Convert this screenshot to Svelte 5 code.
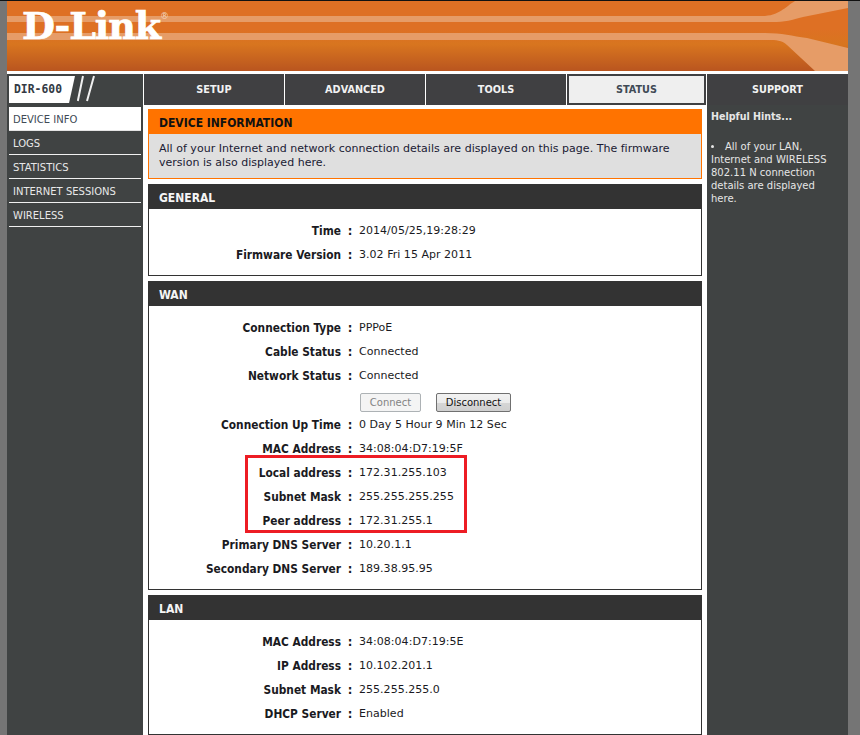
<script>
  const tabs = [
    { label: 'SETUP' },
    { label: 'ADVANCED' },
    { label: 'TOOLS' },
    { label: 'STATUS', active: true },
    { label: 'SUPPORT' }
  ];
  const side = ['DEVICE INFO', 'LOGS', 'STATISTICS', 'INTERNET SESSIONS', 'WIRELESS'];
  const general = [['Time', '2014/05/25,19:28:29'], ['Firmware Version', '3.02 Fri 15 Apr 2011']];
  const wanA = [['Connection Type', 'PPPoE'], ['Cable Status', 'Connected'], ['Network Status', 'Connected']];
  const wanB = [
    ['Connection Up Time', '0 Day 5 Hour 9 Min 12 Sec'],
    ['MAC Address', '34:08:04:D7:19:5F'],
    ['Local address', '172.31.255.103'],
    ['Subnet Mask', '255.255.255.255'],
    ['Peer address', '172.31.255.1'],
    ['Primary DNS Server', '10.20.1.1'],
    ['Secondary DNS Server', '189.38.95.95']
  ];
  const lan = [
    ['MAC Address', '34:08:04:D7:19:5E'],
    ['IP Address', '10.102.201.1'],
    ['Subnet Mask', '255.255.255.0'],
    ['DHCP Server', 'Enabled']
  ];
</script>

{#snippet row(r)}
  <div class="row"><span class="k">{r[0]}</span><span class="c">:</span><span class="v">{r[1]}</span></div>
{/snippet}

<div class="page">
  <div class="inner">
    <header class="banner">
      <svg class="swoosh" viewBox="0 0 841 70" width="841" height="70" aria-hidden="true">
        <path d="M0 15H755C772 15 778 6 788 0H841V7L796 16C785 19 778 21 765 21H0Z" fill="#e69c67"/>
        <path d="M0 32H758C775 32 785 35 800 37L841 47V70H808L780 44C774 39 770 39 760 39H0Z" fill="#e69c67"/>
      </svg>
      <div class="logo">D-Link<sup>®</sup></div>
    </header>

    <nav class="nav">
      <div class="brand">
        <span class="model">DIR-600</span>
        <svg class="slashes" width="30" height="29" viewBox="0 0 30 29" aria-hidden="true">
          <path d="M6 2 0.8 27M17 2 10 27" stroke="#f0f0f0" stroke-width="2" fill="none"/>
        </svg>
      </div>
      {#each tabs as t}
        <div class="tab" class:active={t.active}>{t.label}</div>
      {/each}
    </nav>

    <div class="layout">
      <aside class="side">
        {#each side as s, i}
          <div class="item" class:on={i === 0}>{s}</div>
        {/each}
      </aside>

      <main class="main">
        <section class="intro">
          <h1>DEVICE INFORMATION</h1>
          <p>All of your Internet and network connection details are displayed on this page. The firmware version is also displayed here.</p>
        </section>

        <section class="box">
          <h2>GENERAL</h2>
          <div class="body">
            {#each general as r}{@render row(r)}{/each}
          </div>
        </section>

        <section class="box">
          <h2>WAN</h2>
          <div class="body wan">
            {#each wanA as r}{@render row(r)}{/each}
            <div class="btns">
              <button class="btn" disabled>Connect</button>
              <button class="btn">Disconnect</button>
            </div>
            {#each wanB as r}{@render row(r)}{/each}
            <div class="mark"></div>
          </div>
        </section>

        <section class="box last">
          <h2>LAN</h2>
          <div class="body">
            {#each lan as r}{@render row(r)}{/each}
          </div>
        </section>
      </main>

      <aside class="hints">
        <strong>Helpful Hints...</strong>
        <ul><li>All of your LAN, Internet and WIRELESS 802.11 N connection details are displayed here.</li></ul>
      </aside>
    </div>
  </div>
</div>

<style>
  :global(body) {
    margin: 0;
    background: #757575;
    font-family: "DejaVu Sans", Verdana, sans-serif;
  }
  .page {
    width: 860px;
    height: 735px;
    overflow: hidden;
    box-sizing: border-box;
    border-top: 1px solid #111;
    padding: 0 12px 0 7px;
    background: #757575;
    font-size: 11px;
  }
  .inner {
    background: #fff;
    height: 734px;
  }
  .banner {
    position: relative;
    height: 70px;
    background: linear-gradient(#de7024 0, #de7024 40%, #d8751f 62%, #b9551f 100%);
    overflow: hidden;
  }
  .swoosh { position: absolute; left: 0; top: 0; }
  .logo {
    position: relative;
    padding: 5px 0 0 15px;
    font: bold 38px/40px "DejaVu Serif", serif;
    letter-spacing: -1.1px;
    color: #fff;
    -webkit-text-stroke: .7px #fff;
  }
  .logo sup {
    font: 9px "DejaVu Sans", sans-serif;
    letter-spacing: 0;
    vertical-align: 20px;
    line-height: 0;
    -webkit-text-stroke: 0;
    color: #f3d5bf;
  }
  .nav {
    display: grid;
    grid-template-columns: 136px 140px 140px 140px 139px 141px;
    column-gap: 1px;
    height: 29px;
    margin-top: 3px;
  }
  .brand {
    background: #404343;
    padding: 2px;
    display: flex;
    align-items: stretch;
  }
  .model {
    background: #fff;
    width: 66px;
    padding-left: 5px;
    box-sizing: border-box;
    font: bold 11.4px/26px "DejaVu Sans Mono", monospace;
    color: #333a44;
    clip-path: polygon(0 0, 100% 0, 91% 100%, 0 100%);
  }
  .slashes { margin: -2px 0 0 2px; }
  .tab {
    background: #404042;
    color: #f2f2f2;
    font-weight: bold;
    font-stretch: condensed;
    font-size: 10.8px;
    line-height: 31px;
    text-align: center;
  }
  .tab.active {
    background: #efefef;
    color: #404a55;
    box-sizing: border-box;
    border: 2px solid #404042;
    line-height: 27px;
  }
  .layout {
    display: grid;
    grid-template-columns: 136px 564px 141px;
    margin-top: 2px;
  }
  .side {
    background: #404343;
    padding: 2px;
    height: 630px;
    box-sizing: border-box;
  }
  .item {
    color: #e8e8e8;
    font-size: 10px;
    line-height: 25px;
    height: 23px;
    padding-left: 4px;
    border-bottom: 1px solid #f0f0f0;
  }
  .item.on {
    background: #fff;
    color: #404a55;
    border-bottom-color: #e4e4e4;
  }
  .main {
    padding: 4px 5px 0 5px;
  }
  .intro {
    border: 1px solid #ff7300;
    background: #dfdfdf;
    height: 70px;
    box-sizing: border-box;
    margin-bottom: 5px;
  }
  .intro h1 {
    margin: 0;
    background: #ff7300;
    color: #111;
    font-size: 12px;
    font-stretch: condensed;
    font-weight: bold;
    line-height: 26px;
    height: 24px;
    padding-left: 10px;
  }
  .intro p {
    margin: 0;
    padding: 8px 10px 0 10px;
    font-size: 11px;
    letter-spacing: .02px;
    line-height: 14px;
    color: #1a1a33;
  }
  .box {
    border: 1px solid #333;
    border-top: 0;
    margin-bottom: 5px;
    background: #fff;
  }
  .box h2 {
    margin: 0 -1px;
    background: #333;
    color: #f5f5f5;
    font-size: 12px;
    font-stretch: condensed;
    font-weight: bold;
    line-height: 29px;
    height: 25px;
    padding-left: 11px;
  }
  .body {
    position: relative;
    padding: 10px 0 8px;
  }
  .row {
    display: grid;
    grid-template-columns: 192px 18px 1fr;
    height: 24px;
    line-height: 24px;
    font-size: 11px;
    letter-spacing: .03px;
    color: #1a1a22;
  }
  .k {
    font-size: 11.8px;
    letter-spacing: 0;
    font-weight: bold;
    font-stretch: condensed;
    text-align: right;
    white-space: nowrap;
  }
  .c { font-size: 11.5px; font-weight: bold; text-align: center; }
  .v { white-space: nowrap; }
  .btns {
    display: flex;
    gap: 15px;
    padding: 5px 0 0 211px;
    height: 25px;
    box-sizing: border-box;
    align-items: flex-start;
  }
  .btn {
    font: 10px "DejaVu Sans", sans-serif;
    height: 19px;
    padding: 0;
    border: 1px solid #707070;
    border-radius: 2px;
    background: linear-gradient(#f2f2f2, #ebebeb 50%, #d6d6d6 51%, #cfcfcf);
    color: #111;
    width: 75px;
  }
  .btn[disabled] {
    width: 61px;
    border-color: #adb2b5;
    background: #f4f4f4;
    color: #838383;
  }
  .mark {
    position: absolute;
    left: 96px;
    top: 149px;
    width: 216px;
    height: 72px;
    border: 3px solid #ed1c24;
  }
  .hints {
    background: #404343;
    color: #e6e6e6;
    height: 630px;
    font-size: 10px;
    line-height: 13px;
    padding: 4px 12px 0 4px;
    box-sizing: border-box;
  }
  .hints strong { display: block; font-size: 10.6px; font-stretch: condensed; line-height: 14px; }
  .hints ul { margin: 17px 0 0; padding: 0; list-style-position: inside; }
</style>
